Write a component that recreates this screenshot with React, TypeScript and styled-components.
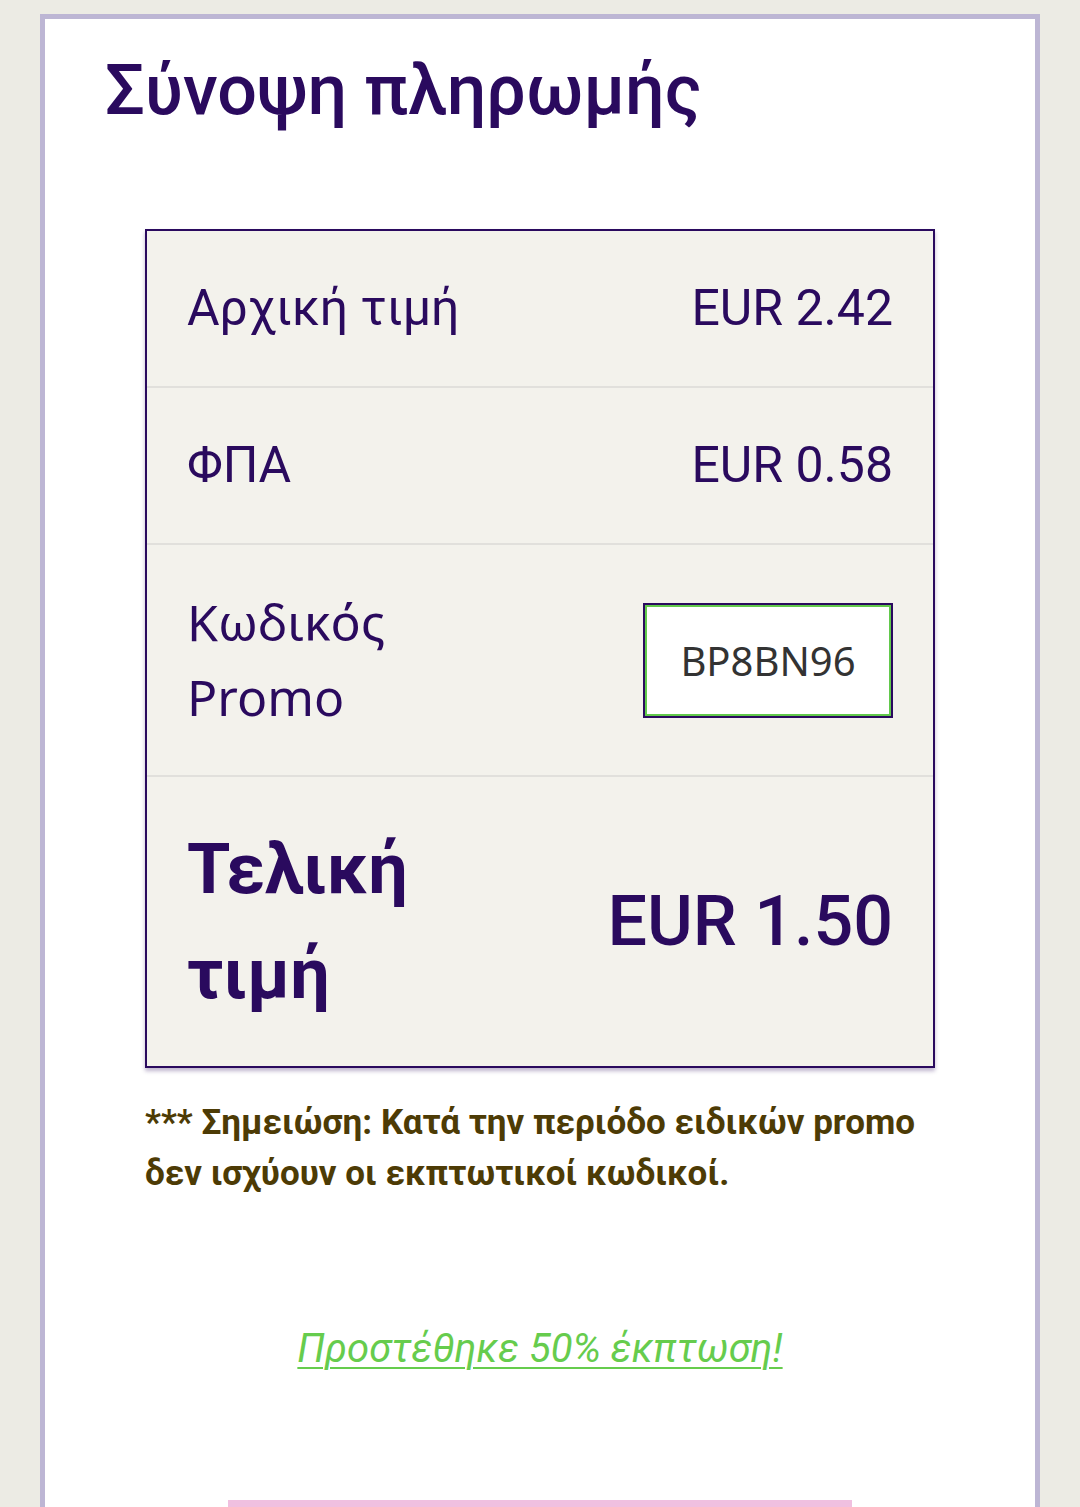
import styled, { createGlobalStyle } from "styled-components";

const GlobalStyle = createGlobalStyle`
  html, body {
    margin: 0;
    padding: 0;
    background: #ecebe4;
  }
  body {
    font-family: Roboto, "Noto Sans", sans-serif;
  }
`;

const rows = [
  { label: "Αρχική τιμή", value: "EUR 2.42" },
  { label: "ΦΠΑ", value: "EUR 0.58" },
];

const App = () => {
  return (
    <>
      <GlobalStyle />
      <Page>
        <Card>
          <Title>Σύνοψη πληρωμής</Title>

          <Summary>
            {rows.map((row) => (
              <Row key={row.label}>
                <Label>{row.label}</Label>
                <Value>{row.value}</Value>
              </Row>
            ))}

            <Row>
              <PromoLabel>Κωδικός Promo</PromoLabel>
              <Value>
                <PromoInput defaultValue="BP8BN96" readOnly />
              </Value>
            </Row>

            <Row last>
              <TotalLabel>Τελική τιμή</TotalLabel>
              <TotalValue>EUR 1.50</TotalValue>
            </Row>
          </Summary>

          <Note>
            *** Σημειώση: Κατά την περιόδο ειδικών promo δεν ισχύουν οι
            εκπτωτικοί κωδικοί.
          </Note>

          <Discount href="#">Προστέθηκε 50% έκπτωση!</Discount>

          <PayButton />
        </Card>
      </Page>
    </>
  );
};

const Page = styled.div`
  padding: 14px 40px 0;
  height: 1507px;
  box-sizing: border-box;
  overflow: hidden;
`;

const Card = styled.section`
  background: #ffffff;
  border: 5px solid #bdb6d4;
  border-bottom: none;
  padding: 29px 60px 0;
  min-height: 1600px;
  display: flex;
  flex-direction: column;
`;

const Title = styled.h1`
  margin: 0 0 97px;
  font-family: Roboto, sans-serif;
  font-size: 70px;
  font-weight: 500;
  line-height: 84px;
  color: #2a0a5e;
`;

const Summary = styled.div`
  margin: 0 40px;
  background: #f3f2ec;
  border: 2px solid #2a0a5e;
  box-shadow: 0 3px 4px rgba(42, 10, 94, 0.3);
`;

const Row = styled.div<{ last?: boolean }>`
  display: grid;
  grid-template-columns: 1fr 1fr;
  align-items: center;
  padding: 40px;
  border-bottom: ${({ last }) => (last ? "none" : "2px solid #e1e0dc")};
`;

const Label = styled.div`
  font-family: Roboto, sans-serif;
  font-size: 50px;
  line-height: 75px;
  color: #2a0a5e;
`;

const PromoLabel = styled(Label)`
  font-family: "Noto Sans", "Open Sans", sans-serif;
`;

const Value = styled.div`
  display: flex;
  justify-content: flex-end;
  font-family: Roboto, sans-serif;
  font-size: 50px;
  line-height: 75px;
  color: #2a0a5e;
`;

const PromoInput = styled.input`
  width: 250px;
  height: 115px;
  box-sizing: border-box;
  border: 2px solid #2a0a5e;
  box-shadow: inset 0 0 0 2px #62c94c;
  background: #ffffff;
  outline: none;
  padding: 0;
  text-align: center;
  font-family: "Noto Sans", "Open Sans", sans-serif;
  font-size: 40px;
  color: #333333;
`;

const TotalLabel = styled.div`
  font-family: Roboto, sans-serif;
  font-size: 70px;
  font-weight: 700;
  line-height: 104.5px;
  color: #2a0a5e;
`;

const TotalValue = styled(TotalLabel)`
  text-align: right;
  font-weight: 500;
`;

const Note = styled.p`
  margin: 29px 40px 0;
  font-family: Roboto, sans-serif;
  font-size: 35px;
  font-weight: 700;
  line-height: 51px;
  color: #4d3b05;
`;

const Discount = styled.a`
  align-self: center;
  margin-top: 126px;
  font-family: Roboto, sans-serif;
  font-size: 40px;
  font-style: italic;
  line-height: normal;
  color: #66cc4d;
  text-decoration: underline;
  text-decoration-thickness: 2px;
  text-underline-offset: 5px;
`;

const PayButton = styled.div`
  align-self: center;
  margin-top: 128px;
  width: 624px;
  height: 90px;
  background: #f0c0e0;
`;

export default App;
